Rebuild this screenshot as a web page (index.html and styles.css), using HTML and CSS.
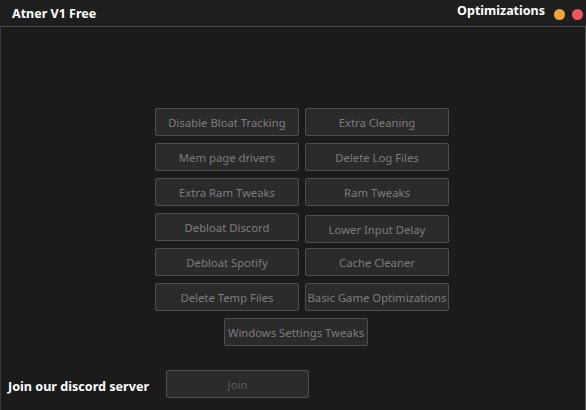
FILE: index.html
```html
<!DOCTYPE html>
<html>
<head>
<meta charset="utf-8">
<link rel="stylesheet" href="styles.css">
</head>
<body>
<div class="app">
  <div class="titlebar">
    <span class="title">Atner V1 Free</span>
    <span class="section">Optimizations</span>
    <span class="dot dot-min"></span>
    <span class="dot dot-close"></span>
  </div>
  <div class="main">
    <div class="grid">
      <button class="btn">Disable Bloat Tracking</button>
      <button class="btn">Extra Cleaning</button>
      <button class="btn">Mem page drivers</button>
      <button class="btn">Delete Log Files</button>
      <button class="btn">Extra Ram Tweaks</button>
      <button class="btn">Ram Tweaks</button>
      <button class="btn">Debloat Discord</button>
      <button class="btn btn-low">Lower Input Delay</button>
      <button class="btn">Debloat Spotify</button>
      <button class="btn">Cache Cleaner</button>
      <button class="btn">Delete Temp Files</button>
      <button class="btn">Basic Game Optimizations</button>
    </div>
    <button class="btn btn-wide">Windows Settings Tweaks</button>
    <div class="footer">
      <span class="join-label">Join our discord server</span>
      <button class="btn btn-join">Join</button>
    </div>
  </div>
</div>
</body>
</html>
```
FILE: styles.css
```css
html, body {
  margin: 0;
  padding: 0;
  background: #1b1b1b;
}
body {
  width: 586px;
  height: 410px;
  overflow: hidden;
  font-family: "Noto Sans", "Open Sans", sans-serif;
}
.app {
  display: flex;
  flex-direction: column;
  height: 410px;
}
.titlebar {
  height: 27px;
  box-sizing: border-box;
  border-bottom: 1px solid #4a4a4a;
  background: #1e1e1e;
  display: flex;
  align-items: center;
  padding-left: 12px;
  padding-right: 3px;
}
.title {
  color: #ffffff;
  font-weight: bold;
  font-size: 12.5px;
  flex: 1;
  margin-top: 1px;
}
.section {
  color: #ffffff;
  font-weight: bold;
  font-size: 12.5px;
  margin-right: 9px;
  margin-top: -5px;
}
.dot {
  width: 11px;
  height: 11px;
  border-radius: 50%;
  margin-left: 6px;
  margin-top: 2px;
}
.dot-min { background: #f6a534; margin-left: 0; }
.dot-close { background: #f0545c; margin-left: 7px; margin-right: 0; }
.main {
  flex: 1;
  border-left: 1px solid #3a3a3a;
  border-right: 1px solid #585858;
  padding-top: 81px;
}
.grid {
  display: grid;
  grid-template-columns: 144px 144px;
  column-gap: 6px;
  row-gap: 7px;
  margin-left: 154px;
}
.btn {
  height: 28px;
  box-sizing: border-box;
  background: #2b2b2b;
  border: 1px solid #4e4e4e;
  border-radius: 2px;
  color: #7c7c7c;
  font-family: "Noto Sans", "Open Sans", sans-serif;
  font-size: 11.3px;
  padding: 0;
  white-space: nowrap;
  display: flex;
  align-items: center;
  justify-content: center;
}
.btn-low {
  margin-top: 2px;
  margin-bottom: -2px;
}
.btn-wide {
  width: 144px;
  margin-top: 7px;
  margin-left: 223px;
}
.footer {
  display: flex;
  align-items: center;
  margin-top: 24px;
  padding-left: 7px;
}
.join-label {
  color: #ffffff;
  font-weight: bold;
  font-size: 12.6px;
  width: 158px;
  margin-top: 5px;
}
.btn-join {
  width: 143px;
  color: #5e5e5e;
}
```
